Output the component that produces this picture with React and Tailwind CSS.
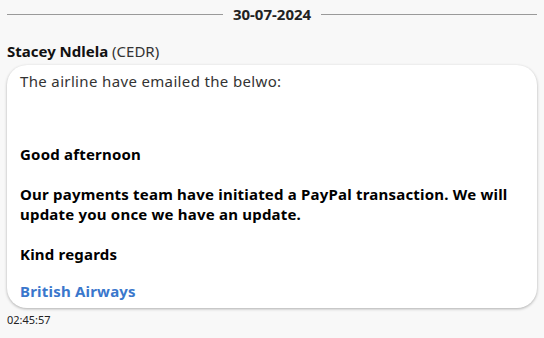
export default function App() {
  return (
    <div className="w-[544px] h-[338px] bg-[#f8f8f8] px-[7px] pt-[4px]" style={{ fontFamily: "'Noto Sans', sans-serif" }}>
      <div className="flex items-center gap-2 h-[20px]">
        <div className="flex-1 h-px bg-[#9a9a9a]" />
        <div className="text-[15px] font-bold text-[#222] px-[2px]">30-07-2024</div>
        <div className="flex-1 h-px bg-[#9a9a9a]" />
      </div>
      <div className="mt-[17px] text-[15px] text-[#111] leading-[20px]">
        <span className="font-bold">Stacey Ndlela</span> <span className="text-[#333]">(CEDR)</span>
      </div>
      <div className="mt-[4px] bg-white rounded-[20px] shadow-[0_1px_3px_rgba(0,0,0,0.3)] px-[13px] pt-[6px] pb-[7px] text-[15px] leading-[20px] tracking-[0.2px]">
        <p className="text-[#333] mb-[53px] tracking-[0.35px]">The airline have emailed the belwo:</p>
        <p className="font-bold text-black">Good afternoon</p>
        <p className="font-bold text-black mt-[20px]">Our payments team have initiated a PayPal transaction. We will update you once we have an update.</p>
        <p className="font-bold text-black mt-[20px]">Kind regards</p>
        <p className="font-bold text-[#3a77cc] mt-[17px]">British Airways</p>
      </div>
      <div className="mt-[4px] text-[11px] text-[#222]">02:45:57</div>
    </div>
  );
}
